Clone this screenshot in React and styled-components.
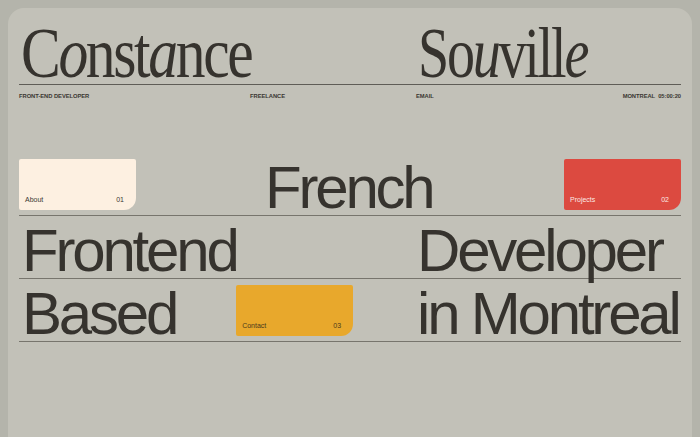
import React from 'react';
import styled, { createGlobalStyle } from 'styled-components';

const GlobalStyle = createGlobalStyle`
  html, body {
    margin: 0;
    padding: 0;
    background: #b4b4ab;
  }
  body {
    font-family: "Liberation Sans", Arial, sans-serif;
    color: #37342f;
  }
`;

const Page = styled.div`
  padding: 8px 8px 0;
  min-height: 429px;
`;

const Sheet = styled.main`
  background: #c2c1b8;
  border-radius: 16px 16px 0 0;
  min-height: 429px;
  padding: 0 11px;
  box-sizing: border-box;
`;

const NameRow = styled.header`
  display: grid;
  grid-template-columns: 397px 1fr;
  padding: 14px 0 0 2px;
  border-bottom: 1px solid #5f5d57;
`;

const Name = styled.h1`
  margin: 0;
  font-family: "Liberation Serif", "Times New Roman", serif;
  font-weight: 400;
  font-size: 71px;
  line-height: 62px;
  letter-spacing: -0.04em;
  color: #36332e;
  white-space: nowrap;
  span.word {
    display: inline-block;
    transform: scaleX(${(p) => p.$scale});
    transform-origin: left center;
  }
`;

const Ital = styled.i`
  font-style: italic;
`;

const InfoRow = styled.nav`
  display: grid;
  grid-template-columns: 231px 166px 1fr auto;
  margin-top: 6px;
  font-size: 5.8px;
  line-height: 10px;
  font-weight: 700;
  letter-spacing: -0.05px;
  text-transform: uppercase;
  color: #3a3732;
`;

const Rows = styled.section`
  margin-top: 53px;
`;

const Row = styled.div`
  display: grid;
  grid-template-columns: 395px 1fr;
  height: 62px;
  border-bottom: 1px solid #77756d;
  &:first-child {
    height: 61px;
  }
`;

const Cell = styled.div`
  display: flex;
  align-items: flex-end;
  justify-content: ${(p) => (p.$end ? 'flex-end' : 'flex-start')};
`;

const Big = styled.span`
  font-size: 60px;
  line-height: 54px;
  letter-spacing: -3.2px;
  margin-left: ${(p) => (p.$ml || 0) + 3}px;
  color: #36332e;
  white-space: nowrap;
`;

const Tile = styled.a`
  box-sizing: border-box;
  width: 117px;
  height: 51px;
  margin: 0 0 5px ${(p) => p.$ml || 0}px;
  padding: 0 12px 6px 6px;
  display: flex;
  align-items: flex-end;
  justify-content: space-between;
  background: ${(p) => p.$bg};
  color: ${(p) => p.$fg};
  border-radius: 2px 2px 12px 2px;
  font-size: 7px;
  line-height: 9px;
  text-decoration: none;
  flex-shrink: 0;
`;

export default function App() {
  return (
    <>
      <GlobalStyle />
      <Page>
        <Sheet>
          <NameRow>
            <Name $scale={0.84}>
              <span className="word">
                C<Ital>o</Ital>nst<Ital>a</Ital>nce
              </span>
            </Name>
            <Name $scale={0.79}>
              <span className="word">
                So<Ital>u</Ital>vill<Ital>e</Ital>
              </span>
            </Name>
          </NameRow>
          <InfoRow>
            <span>Front-end developer</span>
            <span>Freelance</span>
            <span>Email</span>
            <span>Montreal&nbsp; 05:00:20</span>
          </InfoRow>
          <Rows>
            <Row>
              <Cell>
                <Tile href="#about" $bg="#fdf0e1" $fg="#3a3732">
                  <span>About</span>
                  <span>01</span>
                </Tile>
                <Big $ml={126}>French</Big>
              </Cell>
              <Cell $end>
                <Tile href="#projects" $bg="#dc4a40" $fg="#fbe9e4">
                  <span>Projects</span>
                  <span>02</span>
                </Tile>
              </Cell>
            </Row>
            <Row>
              <Cell>
                <Big>Frontend</Big>
              </Cell>
              <Cell>
                <Big>Developer</Big>
              </Cell>
            </Row>
            <Row>
              <Cell>
                <Big>Based</Big>
                <Tile href="#contact" $bg="#e8a82c" $fg="#4a3a1c" $ml={60}>
                  <span>Contact</span>
                  <span>03</span>
                </Tile>
              </Cell>
              <Cell>
                <Big>in Montreal</Big>
              </Cell>
            </Row>
          </Rows>
        </Sheet>
      </Page>
    </>
  );
}
